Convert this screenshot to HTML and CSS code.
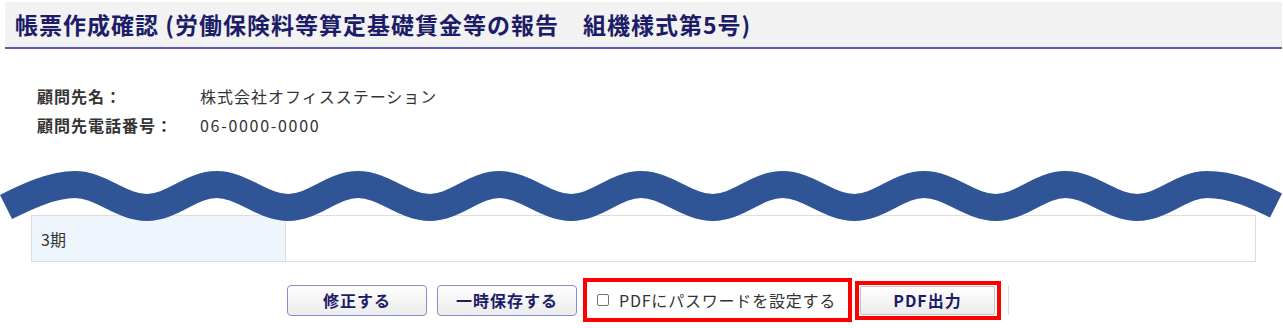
FILE: index.html
```html
<!DOCTYPE html>
<html lang="ja">
<head>
    <meta charset="UTF-8">
    <meta name="viewport" content="width=device-width, initial-scale=1.0">
    <title>帳票作成確認</title>
    <link rel="stylesheet" href="styles.css">
</head>
<body>

<div class="page">
    <!-- タイトル -->
    <div class="title-bar">
        <h1>帳票作成確認 (労働保険料等算定基礎賃金等の報告　組機様式第5号)</h1>
    </div>

    <!-- 顧問先情報 -->
    <div class="client-info">
        <div class="info-row">
            <span class="info-label">顧問先名：</span>
            <span class="info-value">株式会社オフィスステーション</span>
        </div>
        <div class="info-row">
            <span class="info-label">顧問先電話番号：</span>
            <span class="info-value info-tel">06-0000-0000</span>
        </div>
    </div>

    <!-- 期間テーブル -->
    <table class="period-table">
        <tr>
            <th>3期</th>
            <td></td>
        </tr>
    </table>

    <!-- ボタン -->
    <div class="actions">
        <button class="btn">修正する</button>
        <button class="btn">一時保存する</button>
        <label class="mark mark-check">
            <input type="checkbox" class="pw-check">
            <span>PDFにパスワードを設定する</span>
        </label>
        <div class="mark mark-pdf">
            <button class="btn btn-pdf">PDF出力</button>
        </div>
        <span class="separator"></span>
    </div>

    <!-- 省略を示す波線 -->
    <svg class="wave" width="1283" height="328" viewBox="0 0 1283 328">
        <path d="M6 207 C26 197 52 184.5 75 184.5
                 C100.8 184.5 121 207.5 146.75 207.5
                 S190.7 184.5 216.5 184.5
                 S262.5 207.5 288.25 207.5
                 S332.2 184.5 358 184.5
                 S404 207.5 429.75 207.5
                 S473.7 184.5 499.5 184.5
                 S545.5 207.5 571.25 207.5
                 S615.2 184.5 641 184.5
                 S687 207.5 712.75 207.5
                 S756.7 184.5 782.5 184.5
                 S828.5 207.5 854.25 207.5
                 S898.2 184.5 924 184.5
                 S970 207.5 995.75 207.5
                 S1039.7 184.5 1065.5 184.5
                 S1111.5 207.5 1137.25 207.5
                 S1181.2 184.5 1207 184.5
                 C1233 184.5 1256 195.5 1276 205.5"
              fill="none" stroke="#2f5597" stroke-width="27" stroke-linecap="butt"/>
    </svg>
</div>

</body>
</html>
```

FILE: styles.css
```css
* {
    box-sizing: border-box;
}

body {
    margin: 0;
    padding: 0;
    background-color: #ffffff;
    font-family: "Noto Sans CJK JP", "Noto Sans", sans-serif;
    color: #333;
}

.page {
    position: relative;
    width: 1283px;
    height: 328px;
    overflow: hidden;
}

/* タイトル */
.title-bar {
    margin: 2px 1px 0 5px;
    height: 47px;
    background-color: #f2f2f2;
    border-bottom: 2px solid #5a5ab4;
    display: flex;
    align-items: center;
    padding-left: 10px;
}

.title-bar h1 {
    margin: 0;
    font-size: 23px;
    font-weight: bold;
    color: #1c1c68;
    line-height: 1;
    letter-spacing: 1px;
}

/* 顧問先情報 */
.client-info {
    padding-top: 32px;
    padding-left: 37px;
}

.info-row {
    display: flex;
    height: 29px;
    align-items: center;
    font-size: 16px;
}

.info-label {
    width: 163px;
    font-weight: bold;
    letter-spacing: 1px;
}

.info-value {
    color: #333;
    letter-spacing: 1px;
}

.info-tel {
    letter-spacing: 1.7px;
}

/* 期間テーブル */
.period-table {
    margin-top: 76px;
    margin-left: 31px;
    width: 1225px;
    border-collapse: collapse;
}

.period-table th,
.period-table td {
    height: 46px;
    border: 1px solid #dedede;
    padding: 0 9px;
    font-size: 16px;
    font-weight: normal;
    text-align: left;
    color: #333;
}

.period-table th {
    width: 254px;
    background-color: #eef5fc;
}

/* ボタン */
.actions {
    margin-top: 16px;
    display: flex;
    align-items: center;
    justify-content: center;
    padding-left: 13px;
}

.btn {
    width: 140px;
    height: 31px;
    margin-right: 10px;
    border: 1px solid #8a8ad0;
    border-radius: 4px;
    background: linear-gradient(#ffffff, #ebebeb);
    font-family: "Noto Sans CJK JP", sans-serif;
    font-size: 16px;
    font-weight: bold;
    color: #1c1c68;
    letter-spacing: 1px;
    padding: 0;
}

.btn + .btn {
    margin-right: 6px;
}

.mark {
    border: 4px solid #ff0000;
    display: flex;
    align-items: center;
}

.mark-check {
    width: 269px;
    height: 44px;
    padding-left: 10px;
    font-size: 16px;
    color: #333;
    letter-spacing: 0.8px;
}

.pw-check {
    appearance: none;
    width: 12px;
    height: 12px;
    margin: 0 10px 0 0;
    border: 1px solid #767676;
    border-radius: 2px;
    background: #fff;
}

.mark-pdf {
    margin-left: 3px;
    width: 146px;
    height: 39px;
    padding-left: 1px;
}

.btn-pdf {
    width: 135px;
    height: 29px;
    margin: 0;
    border: 1px solid #c4c4c4;
    border-radius: 2px;
}

.separator {
    margin-left: 7px;
    width: 1px;
    height: 30px;
    background-color: #dddddd;
}

/* 波線 */
.wave {
    position: absolute;
    top: 0;
    left: 0;
    pointer-events: none;
}
```
